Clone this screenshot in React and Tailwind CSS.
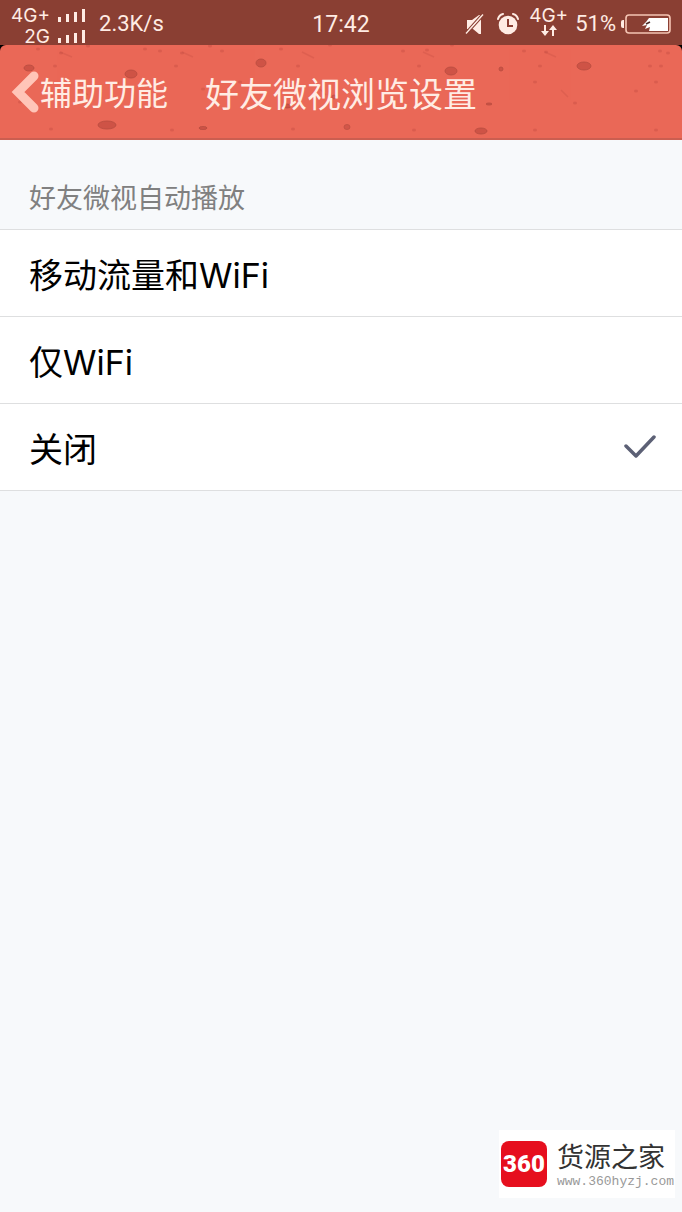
import { useState } from 'react'

const options = [
  { value: 'all', label: '移动流量和WiFi' },
  { value: 'wifi', label: '仅WiFi' },
  { value: 'off', label: '关闭' },
]

// cx, cy, rx, ry, opacity
const spots = [
  [29, 24, 5, 3, 0.6],
  [131, 30, 6, 4, 0.6],
  [107, 81, 9, 4, 0.6],
  [203, 84, 4, 1.5, 0.6],
  [261, 19, 5, 4, 0.6],
  [287, 62, 4, 2, 0.6],
  [334, 53, 2, 2, 0.5],
  [347, 83, 3, 2.5, 0.5],
  [451, 27, 6, 4, 0.6],
  [501, 25, 2, 2, 0.6],
  [584, 22, 7, 4, 0.6],
  [489, 60, 3, 1, 0.6],
  [481, 87, 6, 3, 0.6],
]

const specks = [
  [38, 5], [61, 9], [55, 22], [117, 39], [145, 5], [160, 7], [182, 9], [176, 22],
  [172, 86], [51, 85], [203, 45], [222, 7], [281, 5], [298, 22], [240, 38], [293, 85],
  [403, 7], [427, 6], [419, 22], [414, 86], [416, 38], [452, 1], [524, 7], [546, 8],
  [540, 22], [535, 38], [535, 86], [575, 59], [636, 47], [660, 7], [668, 9], [650, 22],
  [661, 22], [656, 38], [656, 86], [330, 1], [210, 2], [88, 2], [20, 58], [150, 64],
]

function Bars() {
  return (
    <svg className="w-[27px] h-[13px]" viewBox="0 0 27 13" fill="#ffece4" aria-hidden="true">
      <rect x="0" y="8" width="3" height="5" />
      <rect x="8" y="5" width="3" height="8" />
      <rect x="16" y="3" width="3" height="10" />
      <rect x="24" y="0" width="3" height="13" />
    </svg>
  )
}

function StatusBar() {
  return (
    <div className="grid grid-cols-[1fr_auto_1fr] items-center h-[45px] pt-[3px] px-[11px] bg-[#8a3f33] text-[#ffece4] text-[23px] leading-8">
      <div className="flex items-center gap-[14px]">
        <div className="flex flex-col items-end pt-[2px] -mb-[2px] font-['Inter',sans-serif] text-[19px] leading-[21px]">
          <div className="flex items-center gap-2">4G+<Bars /></div>
          <div className="flex items-center gap-2">2G<Bars /></div>
        </div>
        <span className="text-[22px]">2.3K/s</span>
      </div>
      <span className="pt-[2px]">17:42</span>
      <div className="flex items-center justify-end">
        <svg className="w-5 h-5 mr-3" viewBox="0 0 20 20" aria-hidden="true">
          <path d="M2 6H7L14 1H16V20H14L8 15H2Z" fill="#ffece4" />
          <path d="M0 19L17 0" stroke="#8a3f33" strokeWidth="1.4" />
          <path d="M2 20L19 1" stroke="#8a3f33" strokeWidth="1.4" />
          <path d="M1 19.5L18 0.5" stroke="#ffece4" strokeWidth="1.3" />
        </svg>
        <svg className="w-[22px] h-[22px] mr-[10px]" viewBox="0 0 22 22" aria-hidden="true">
          <circle cx="11" cy="12" r="9.3" fill="#ffece4" />
          <path d="M1 6Q2 2 6 1M16 1Q20 2 21 6" fill="none" stroke="#ffece4" strokeWidth="2" strokeLinecap="round" />
          <path d="M11 6V13H16" fill="none" stroke="#8a3f33" strokeWidth="2" />
        </svg>
        <div className="flex flex-col items-center mr-[7px] pb-1 font-['Inter',sans-serif] text-[19px] leading-[18px]">
          <span>4G+</span>
          <svg className="w-4 h-3" viewBox="0 0 16 12" fill="#ffece4" aria-hidden="true">
            <path d="M3 0H5V6H8L4 11L0 6H3Z" />
            <path d="M12 0L16 5H13V11H11V5H8Z" />
          </svg>
        </div>
        <span className="mr-[5px] text-[22px]">51%</span>
        <svg className="w-[50px] h-5" viewBox="0 0 50 20" aria-hidden="true">
          <path d="M3 6H2Q0 6 0 8V12Q0 14 2 14H3Z" fill="#ffece4" />
          <rect x="5" y="1" width="44" height="18" rx="3" fill="none" stroke="#f5c5b4" strokeWidth="1.6" />
          <path d="M29 4H47V17H28L29 13L24 15L26 11L21 12L25 8L28 4Z" fill="#fff" />
          <path d="M25 10L29 8" stroke="#4a2a25" strokeWidth="1.6" />
        </svg>
      </div>
    </div>
  )
}

function Header() {
  return (
    <div className="bg-black">
      <header className="relative grid grid-cols-[1fr_auto_1fr] items-center h-[95px] px-[11px] overflow-hidden rounded-t-[6px] bg-[#ea6857] border-b-2 border-[#cb5e50] text-[#ffece4]">
        <svg className="absolute inset-0 w-full h-full" viewBox="0 0 682 95" preserveAspectRatio="xMidYMid slice" aria-hidden="true">
          {spots.map(([cx, cy, rx, ry, opacity]) => (
            <ellipse key={`${cx}-${cy}`} cx={cx} cy={cy} rx={rx} ry={ry} fill="#bd463c" stroke="#963a30" strokeWidth="0.8" opacity={opacity} />
          ))}
          {specks.map(([cx, cy]) => (
            <ellipse key={`${cx}-${cy}`} cx={cx} cy={cy} rx="2" ry="1.5" fill="#b5423a" opacity="0.3" />
          ))}
          <path d="M60 8L72 13M182 8L193 13M302 8L314 14M423 8L434 13M545 8L556 13M80 45L88 51M320 45L326 51M561 46L568 53" stroke="#c44d42" strokeWidth="1.5" opacity="0.3" />
        </svg>
        <button type="button" className="relative flex items-center text-[32px] leading-[44px]">
          <svg className="w-[29px] h-[44px]" viewBox="0 0 29 44" fill="none" aria-hidden="true">
            <path d="M23 6L7 22L23 38" stroke="#ffc5b8" strokeWidth="9" strokeLinecap="round" strokeLinejoin="miter" />
          </svg>
          <span className="pt-1">辅助功能</span>
        </button>
        <h1 className="relative pt-[6px] text-[34px] leading-[44px]">好友微视浏览设置</h1>
      </header>
    </div>
  )
}

function Watermark() {
  return (
    <a href="#" className="flex items-center gap-[10px] h-[68px] pl-[2px] pr-px bg-white">
      <span className="flex items-center justify-center w-[46px] h-[46px] rounded-lg bg-[#e60f1e] text-white text-2xl font-black">
        360
      </span>
      <span className="flex flex-col pt-1">
        <span className="text-[27px] leading-[32px] text-[#333]">货源之家</span>
        <span className="font-['Liberation_Mono',monospace] text-[13px] leading-4 text-[#999]">www.360hyzj.com</span>
      </span>
    </a>
  )
}

function App() {
  const [selected, setSelected] = useState('off')

  return (
    <div className="flex flex-col min-h-screen bg-[#f7f9fb] font-['Roboto','Noto_Sans_CJK_SC',sans-serif]">
      <StatusBar />
      <Header />
      <main className="flex-1">
        <fieldset>
          <legend className="w-full px-[29px] pt-[39px] pb-[10px] text-[27px] leading-[40px] text-[#808080]">
            好友微视自动播放
          </legend>
          <div className="border-t border-[#dedfe0]">
            {options.map((option) => (
              <label
                key={option.value}
                className="flex items-center justify-between h-[87px] pl-[29px] pr-[26px] bg-white border-b border-[#dedfe0] font-['Inter','Noto_Sans_CJK_SC',sans-serif] text-[34px] text-black cursor-pointer"
              >
                <span className="pt-1">{option.label}</span>
                <input
                  type="radio"
                  name="autoplay"
                  value={option.value}
                  checked={selected === option.value}
                  onChange={() => setSelected(option.value)}
                  className="sr-only"
                />
                {selected === option.value && (
                  <svg className="w-8 h-6" viewBox="0 0 32 24" fill="none" aria-hidden="true">
                    <path d="M2 11L12 21L30 2" stroke="#5c6075" strokeWidth="3.5" strokeLinecap="round" strokeLinejoin="round" />
                  </svg>
                )}
              </label>
            ))}
          </div>
        </fieldset>
      </main>
      <footer className="flex justify-end pr-[7px] pb-[14px]">
        <Watermark />
      </footer>
    </div>
  )
}

export default App
